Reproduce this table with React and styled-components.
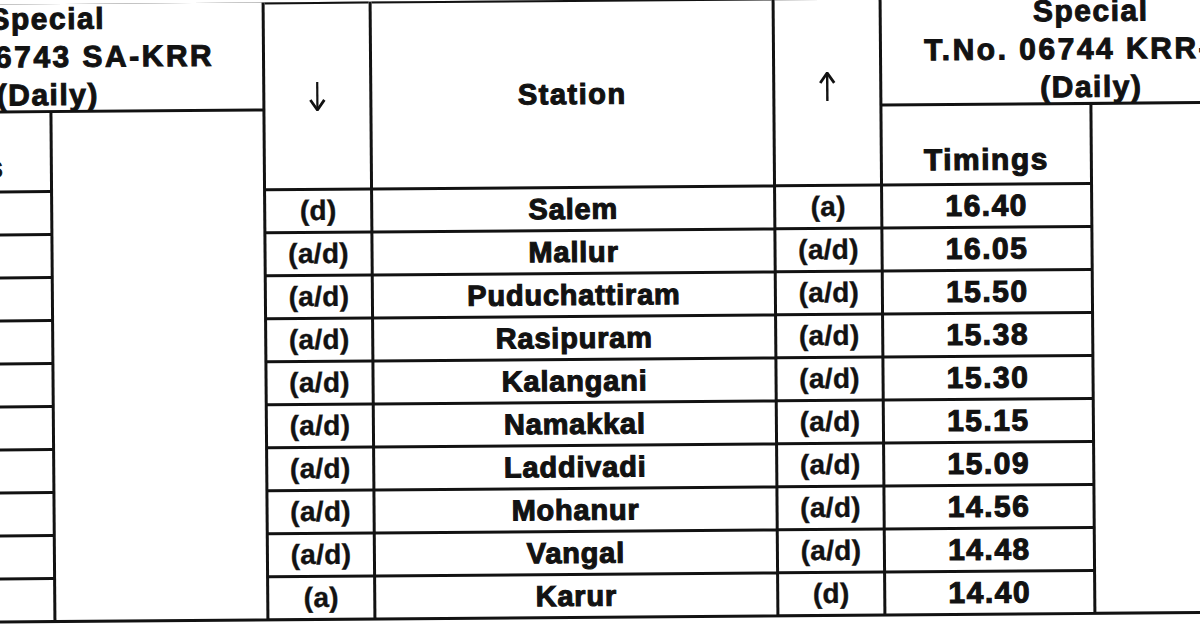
import React from 'react'
import styled, { createGlobalStyle } from 'styled-components'

const GlobalStyle = createGlobalStyle`
  html, body {
    margin: 0;
    padding: 0;
    background: #ffffff;
  }
  body {
    width: 1200px;
    height: 630px;
    overflow: hidden;
  }
`

const INK = '#121212'
const FONT = `"Liberation Sans", Arial, sans-serif`

const Page = styled.div`
  width: 1200px;
  height: 630px;
  overflow: hidden;
  background: #ffffff;
`

// the scan is cropped on both sides, so the sheet starts off the left edge
const Sheet = styled.div`
  display: grid;
  grid-template-columns: 216px 210px 104px 400px 104px 207px 208px;
  grid-template-rows: 106px 77px repeat(10, 40px);
  gap: 3px;
  padding-bottom: 3px;
  width: max-content;
  margin-left: -165px;
  background: ${INK};
  transform: rotate(-0.45deg);
`

const Cell = styled.div`
  background: #ffffff;
  display: flex;
  align-items: center;
  justify-content: center;
  text-align: center;
  font-family: ${FONT};
  font-weight: 700;
  color: ${INK};
  white-space: nowrap;
`

const TrainHead = styled(Cell)`
  grid-column: ${({ $side }) => ($side === 'left' ? '1 / 3' : '6 / 8')};
  grid-row: 1;
  flex-direction: column;
  font-size: 30px;
  line-height: 38px;
  -webkit-text-stroke: 1px ${INK};
`

const TrainLine = styled.span`
  display: block;
  letter-spacing: ${({ $wide }) => ($wide ? '2.5px' : '1.5px')};
`

const TimingsHead = styled(Cell)`
  grid-column: ${({ $side }) => ($side === 'left' ? 1 : 6)};
  grid-row: 2;
  align-items: flex-end;
  padding-bottom: 8px;
  box-sizing: border-box;
  font-size: 30px;
  line-height: 1;
  letter-spacing: 1.5px;
  -webkit-text-stroke: 1.1px ${INK};
`

const BlankColumn = styled(Cell)`
  grid-column: ${({ $side }) => ($side === 'left' ? 2 : 7)};
  grid-row: 2 / 13;
`

const MidHead = styled(Cell)`
  grid-column: ${({ $col }) => $col};
  grid-row: 1 / 3;
  border-top: 2px solid ${INK};
  box-sizing: border-box;
  padding-bottom: ${({ $lift }) => $lift || 0}px;
`

const StationTitle = styled.span`
  font-size: 29px;
  letter-spacing: 1.5px;
  -webkit-text-stroke: 1.1px ${INK};
`

const Arrow = styled.svg`
  width: 20px;
  height: 30px;
`

const CodeCell = styled(Cell)`
  font-size: 28px;
  font-weight: 700;
  letter-spacing: 0.3px;
  -webkit-text-stroke: 0.4px ${INK};
`

const StationCell = styled(Cell)`
  font-size: 29px;
  letter-spacing: 0.8px;
  -webkit-text-stroke: 1.1px ${INK};
`

const TimeCell = styled(Cell)`
  font-size: 30px;
  letter-spacing: 1.5px;
  -webkit-text-stroke: 1.1px ${INK};
`

const stops = [
  { down: '(d)', name: 'Salem', up: '(a)', time: '16.40' },
  { down: '(a/d)', name: 'Mallur', up: '(a/d)', time: '16.05' },
  { down: '(a/d)', name: 'Puduchattiram', up: '(a/d)', time: '15.50' },
  { down: '(a/d)', name: 'Rasipuram', up: '(a/d)', time: '15.38' },
  { down: '(a/d)', name: 'Kalangani', up: '(a/d)', time: '15.30' },
  { down: '(a/d)', name: 'Namakkal', up: '(a/d)', time: '15.15' },
  { down: '(a/d)', name: 'Laddivadi', up: '(a/d)', time: '15.09' },
  { down: '(a/d)', name: 'Mohanur', up: '(a/d)', time: '14.56' },
  { down: '(a/d)', name: 'Vangal', up: '(a/d)', time: '14.48' },
  { down: '(a)', name: 'Karur', up: '(d)', time: '14.40' },
]

const DownArrow = () => (
  <Arrow viewBox="0 0 20 30">
    <line x1="10" y1="1" x2="10" y2="27" stroke={INK} strokeWidth="2.2" />
    <path d="M3 19 L10 29 L17 19" fill="none" stroke={INK} strokeWidth="2.8" />
  </Arrow>
)

const UpArrow = () => (
  <Arrow viewBox="0 0 20 30">
    <line x1="10" y1="3" x2="10" y2="29" stroke={INK} strokeWidth="2.4" />
    <path d="M3 11 L10 1 L17 11" fill="none" stroke={INK} strokeWidth="2.8" />
  </Arrow>
)

const App = () => {
  return (
    <Page>
      <GlobalStyle />
      <Sheet>
        <TrainHead $side="left">
          <TrainLine>Special</TrainLine>
          <TrainLine $wide>T.No. 06743 SA-KRR</TrainLine>
          <TrainLine>(Daily)</TrainLine>
        </TrainHead>
        <TimingsHead $side="left">Timings</TimingsHead>
        <BlankColumn $side="left" />

        <MidHead $col={3}>
          <DownArrow />
        </MidHead>
        <MidHead $col={4}>
          <StationTitle>Station</StationTitle>
        </MidHead>
        <MidHead $col={5} $lift={10}>
          <UpArrow />
        </MidHead>

        <TrainHead $side="right">
          <TrainLine>Special</TrainLine>
          <TrainLine $wide>T.No. 06744 KRR-SA</TrainLine>
          <TrainLine>(Daily)</TrainLine>
        </TrainHead>
        <TimingsHead $side="right">Timings</TimingsHead>
        <BlankColumn $side="right" />

        {stops.map((s) => (
          <React.Fragment key={s.name}>
            <TimeCell />
            <CodeCell>{s.down}</CodeCell>
            <StationCell>{s.name}</StationCell>
            <CodeCell>{s.up}</CodeCell>
            <TimeCell>{s.time}</TimeCell>
          </React.Fragment>
        ))}
      </Sheet>
    </Page>
  )
}

export default App
